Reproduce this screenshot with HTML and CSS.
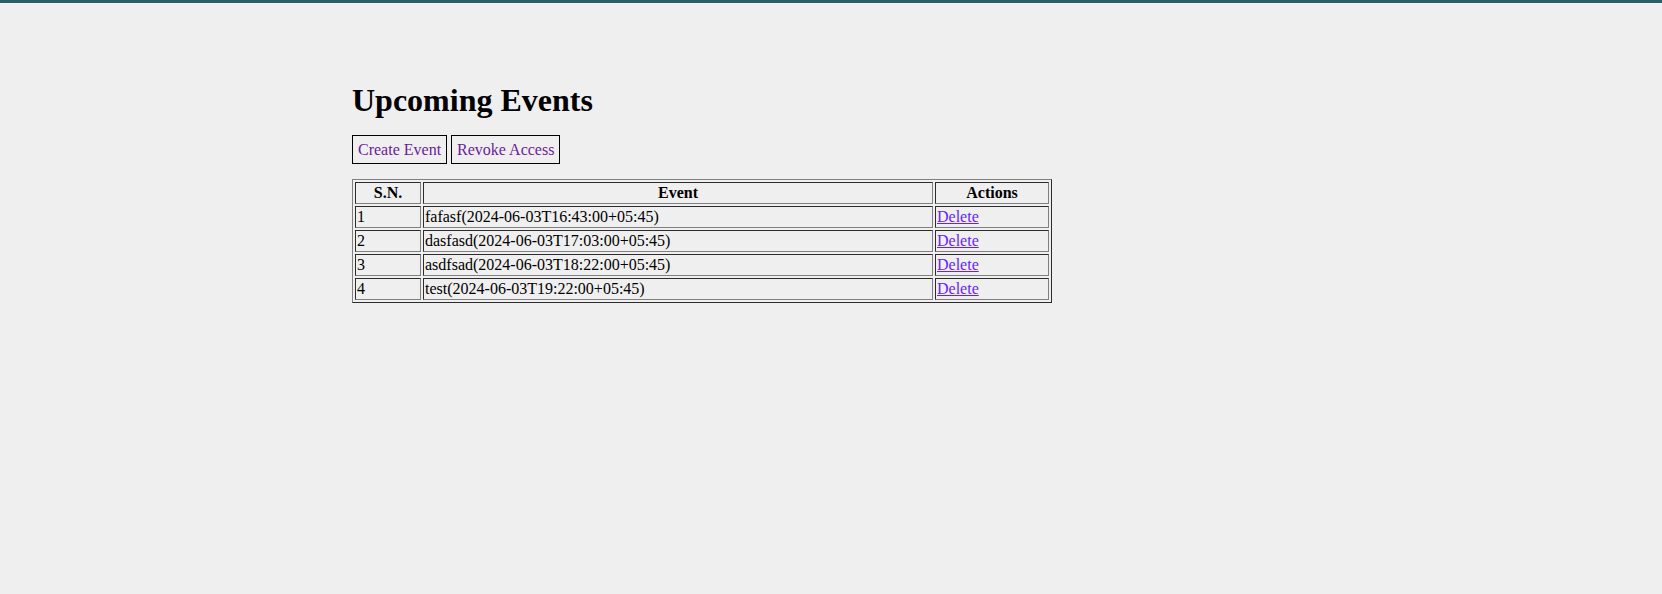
FILE: index.html
```html
<!DOCTYPE html>
<html lang="en">
<head>
<meta charset="utf-8">
<title>Upcoming Events</title>
<link rel="stylesheet" href="styles.css">
</head>
<body>
<div class="topbar"></div>
<main class="container">
  <h1 class="title">Upcoming Events</h1>
  <div class="actions">
    <a class="btn" href="#">Create Event</a>
    <a class="btn" href="#">Revoke Access</a>
  </div>
  <table class="events">
    <thead>
      <tr><th class="c-sn">S.N.</th><th class="c-ev">Event</th><th class="c-act">Actions</th></tr>
    </thead>
    <tbody>
      <tr><td>1</td><td>fafasf(2024-06-03T16:43:00+05:45)</td><td><a class="del" href="#">Delete</a></td></tr>
      <tr><td>2</td><td>dasfasd(2024-06-03T17:03:00+05:45)</td><td><a class="del" href="#">Delete</a></td></tr>
      <tr><td>3</td><td>asdfsad(2024-06-03T18:22:00+05:45)</td><td><a class="del" href="#">Delete</a></td></tr>
      <tr><td>4</td><td>test(2024-06-03T19:22:00+05:45)</td><td><a class="del" href="#">Delete</a></td></tr>
    </tbody>
  </table>
</main>
</body>
</html>
```
FILE: styles.css
```css
html, body {
  margin: 0;
  padding: 0;
  background: #efefef;
  font-family: "Liberation Serif", "Times New Roman", serif;
  font-size: 16px;
  color: #000;
}
.topbar {
  height: 3px;
  background: #2b5e69;
}
.container {
  width: 958px;
  margin: 0 auto;
  padding-top: 79px;
}
.title {
  font-size: 32px;
  font-weight: bold;
  margin: 0 0 16px;
}
.actions {
  display: flex;
  gap: 4px;
  margin-bottom: 15px;
}
.btn {
  display: inline-block;
  border: 1px solid #000;
  padding: 4px 5px;
  line-height: 19px;
  color: #6a1b9a;
  text-decoration: none;
}
.events {
  width: 700px;
  border: 1px outset #808080;
  border-spacing: 2px;
  border-collapse: separate;
}
.events th,
.events td {
  border: 1px inset #808080;
  padding: 1px;
  line-height: 18px;
}
.events th {
  font-weight: bold;
  text-align: center;
}
.events td {
  text-align: left;
}
.c-sn { width: 62px; }
.c-ev { width: 506px; }
.c-act { width: 110px; }
.del {
  color: #651fff;
  text-decoration: underline;
}
```
